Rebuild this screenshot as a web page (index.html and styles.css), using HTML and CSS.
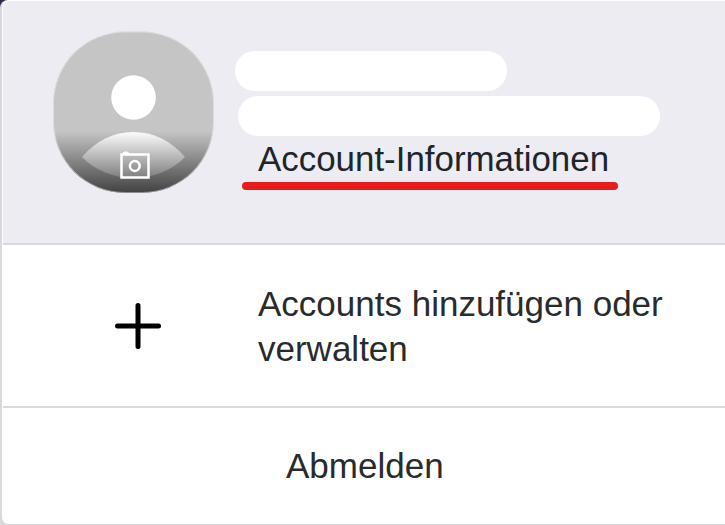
FILE: index.html
```
<!DOCTYPE html>
<html lang="de">
<head>
    <meta charset="UTF-8">
    <meta name="viewport" content="width=device-width, initial-scale=1.0">
    <title>Account</title>
    <link rel="stylesheet" href="styles.css">
</head>
<body>
    <div class="menu">
        <div class="profile">
            <svg class="avatar" viewBox="0 0 163 163" xmlns="http://www.w3.org/2000/svg">
                <defs>
                    <clipPath id="shape">
                        <rect x="1" y="0.5" width="161" height="161.500" rx="72"/>
                    </clipPath>
                    <linearGradient id="shade" x1="0" y1="0" x2="0" y2="1">
                        <stop offset="0" stop-color="#000" stop-opacity="0"/>
                        <stop offset="1" stop-color="#000" stop-opacity="0.68"/>
                    </linearGradient>
                </defs>

                <!-- Person -->
                <g clip-path="url(#shape)">
                    <rect width="163" height="163" fill="#c5c5c5"/>
                    <circle cx="81.500" cy="66.500" r="22.300" fill="#fff"/>
                    <path d="M30 126C57.500 92.500 105.500 92.500 133 126C105.500 154 57.500 154 30 126Z" fill="#fff"/>
                    <rect y="100" width="163" height="63" fill="url(#shade)"/>
                </g>
                <rect x="1.500" y="1" width="160" height="160.500" rx="71.500" fill="none" stroke="#fff" stroke-opacity="0.4"/>

                <!-- Camera -->
                <rect x="69.500" y="123.500" width="27" height="23" fill="none" stroke="#fff" stroke-width="2.500"/>
                <path d="M70.500 122.500L72 121H75.500L77 122.500Z" fill="#fff" stroke="#fff"/>
                <circle cx="82.800" cy="135" r="4.900" fill="none" stroke="#fff" stroke-width="2.500"/>
            </svg>
            <div class="details">
                <div class="bar name"></div>
                <div class="bar email"></div>
                <a class="info">Account-Informationen</a>
                <div class="underline"></div>
            </div>
        </div>

        <div class="row manage">
            <svg class="plus" viewBox="0 0 46 46" xmlns="http://www.w3.org/2000/svg">
                <path d="M23 2.500V43.500M2.500 23H43.500" stroke="#000" stroke-width="5" stroke-linecap="round"/>
            </svg>
            <span>Accounts hinzufügen oder verwalten</span>
        </div>

        <div class="row logout">
            <span>Abmelden</span>
        </div>
    </div>
</body>
</html>
```

FILE: styles.css
```
* {
    box-sizing: border-box;
}

body {
    margin: 0;
    height: 525px;
    overflow: hidden;
    background: linear-gradient(#35264f 0, #35264f 6px, #d8d8de 10px);
    font-family: "Liberation Sans", Arial, sans-serif;
    font-size: 35px;
    line-height: 45px;
    color: #292b2c;
}

.menu {
    height: 525px;
    padding: 1px 0 0 1px;
    background-color: #fff;
    border-left: 2px solid #d8d8de;
    border-bottom: 1px solid #d8d8de;
    border-radius: 8px 0 0 8px;
}

.profile {
    display: flex;
    height: 244px;
    padding: 30px 0 0 49px;
    background-color: #edecf2;
    border-bottom: 2px solid #d8d8de;
    border-top-left-radius: 6px;
}

.avatar {
    width: 163px;
    height: 163px;
}

.details {
    display: flex;
    flex-direction: column;
    padding: 20px 0 0 20px;
}

.bar {
    height: 40px;
    background-color: #fff;
    border-radius: 20px;
}

.name {
    width: 272px;
}

.email {
    width: 422px;
    margin: 5px 0 0 3px;
}

.info {
    margin-left: 23px;
    font-size: 34.9px;
    color: #20252a;
}

.underline {
    width: 376px;
    height: 8px;
    margin: 1px 0 0 7px;
    background-color: #e71c1c;
    border-radius: 4px;
}

.row {
    display: flex;
}

.manage {
    height: 163px;
    padding: 36px 40px 0 112px;
    border-bottom: 2px solid #d8d8de;
}

.plus {
    flex: none;
    width: 46px;
    height: 46px;
    margin: 22px 97px 0 0;
}

.logout {
    padding: 35px 0 0 283px;
}
```
